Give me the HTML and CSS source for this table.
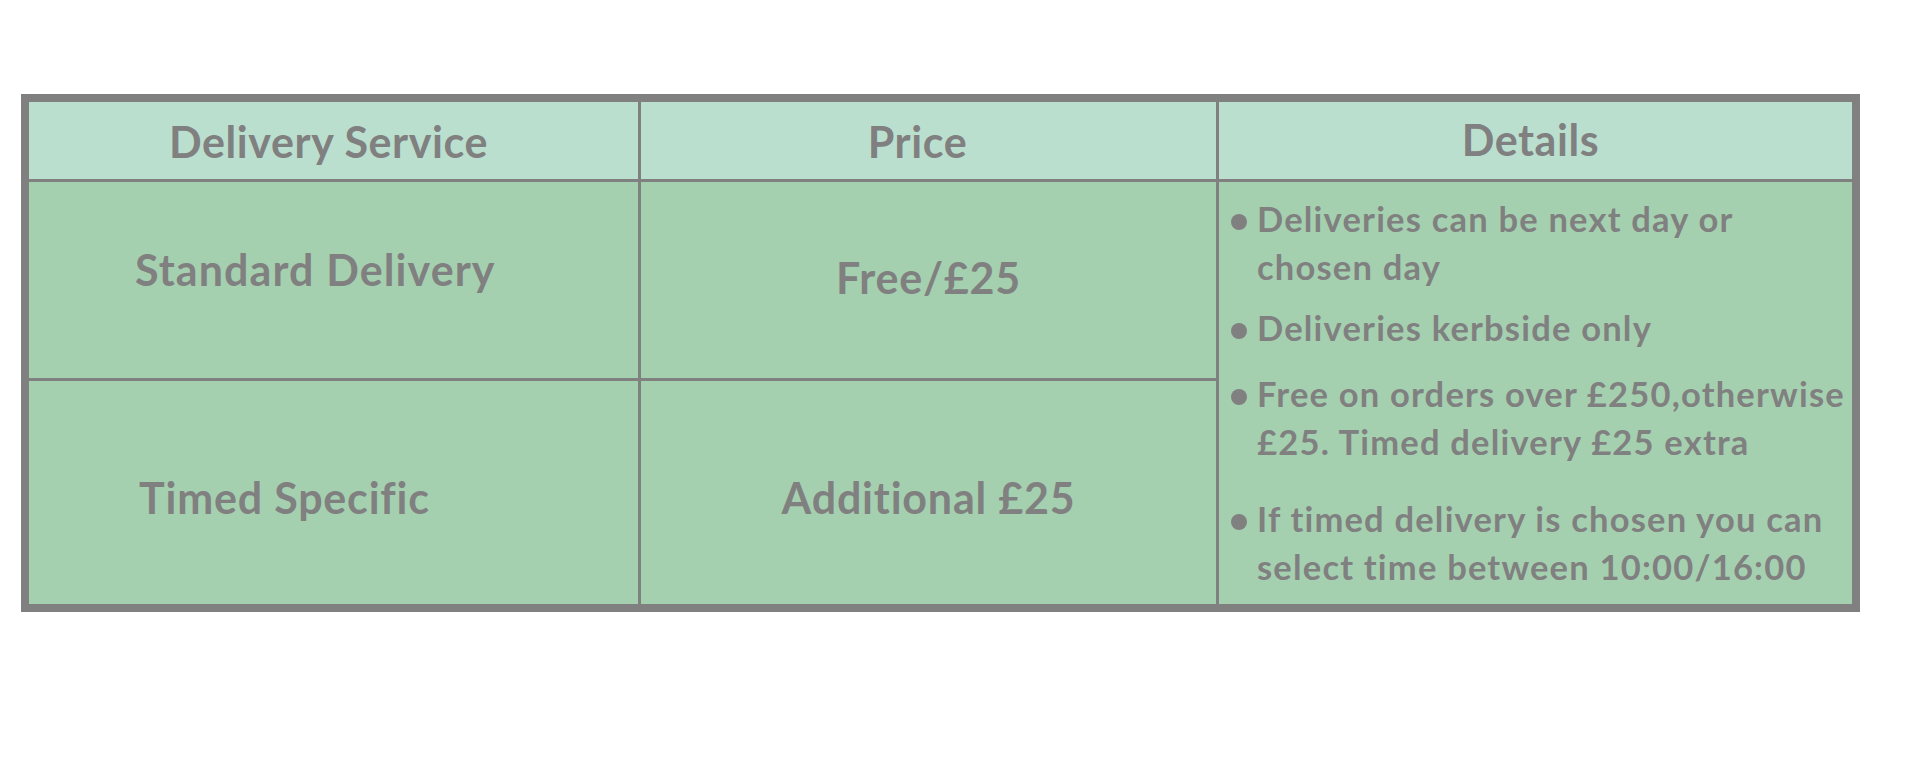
FILE: index.html
```html
<!DOCTYPE html>
<html lang="en">
<head>
<meta charset="utf-8">
<title>Delivery Options</title>
<link rel="stylesheet" href="styles.css">
</head>
<body>
<div class="delivery-table">
  <div class="cell head">Delivery Service</div>
  <div class="cell head head--price">Price</div>
  <div class="cell head head--details">Details</div>

  <div class="cell service service--standard">Standard Delivery</div>
  <div class="cell price price--standard">Free/£25</div>
  <div class="cell details">
    <ul class="detail-list">
      <li class="detail-item"><span class="dot"></span><span class="detail-text">Deliveries can be next day or<br>chosen day</span></li>
      <li class="detail-item detail-item--s"><span class="dot"></span><span class="detail-text">Deliveries kerbside only</span></li>
      <li class="detail-item detail-item--m"><span class="dot"></span><span class="detail-text">Free on orders over £250,otherwise<br>£25. Timed delivery £25 extra</span></li>
      <li class="detail-item detail-item--l"><span class="dot"></span><span class="detail-text">If timed delivery is chosen you can<br>select time between 10:00/16:00</span></li>
    </ul>
  </div>

  <div class="cell service service--timed">Timed Specific</div>
  <div class="cell price price--timed">Additional £25</div>
</div>
</body>
</html>
```

FILE: styles.css
```css
* {
  box-sizing: border-box;
}

html, body {
  margin: 0;
  padding: 0;
  background: #ffffff;
}

.delivery-table {
  display: grid;
  grid-template-columns: 609px 575px 633px;
  grid-template-rows: 77px 196px 223px;
  gap: 3px;
  width: max-content;
  margin: 94px 0 0 21px;
  border: 8px solid #808080;
  background: #808080;
}

.cell {
  font-family: Lato, "Open Sans", "Liberation Sans", sans-serif;
  font-weight: 700;
  color: #808080;
  font-size: 43px;
  line-height: 43px;
  letter-spacing: 0.8px;
  white-space: nowrap;
}

.head {
  background: #bbdfcf;
  text-align: center;
  padding-top: 18px;
  padding-right: 10px;
  letter-spacing: 0.6px;
}

.head--price {
  padding-right: 22px;
}

.head--details {
  padding-top: 16px;
}

.service,
.price,
.details {
  background: #a5d0b0;
}

.service {
  padding-left: 106px;
}

.price {
  text-align: center;
}

.service--standard {
  padding-top: 66px;
  letter-spacing: 1.1px;
}

.price--standard {
  padding-top: 74px;
}

.service--timed {
  padding-left: 110px;
}

.service--timed,
.price--timed {
  padding-top: 95px;
}

.details {
  grid-column: 3;
  grid-row: 2 / span 2;
  padding: 13px 0 0 12px;
  font-size: 34.5px;
  line-height: 48px;
  letter-spacing: 1.2px;
}

.detail-list {
  list-style: none;
  margin: 0;
  padding: 0;
}

.detail-item {
  display: flex;
  align-items: flex-start;
}

.detail-item--s {
  margin-top: 13px;
}

.detail-item--m {
  margin-top: 18px;
}

.detail-item--l {
  margin-top: 29px;
}

.dot {
  flex: none;
  width: 16px;
  height: 16px;
  margin: 19px 10px 0 0;
  border-radius: 50%;
  background: #808080;
}

.detail-text {
  white-space: nowrap;
}
```
